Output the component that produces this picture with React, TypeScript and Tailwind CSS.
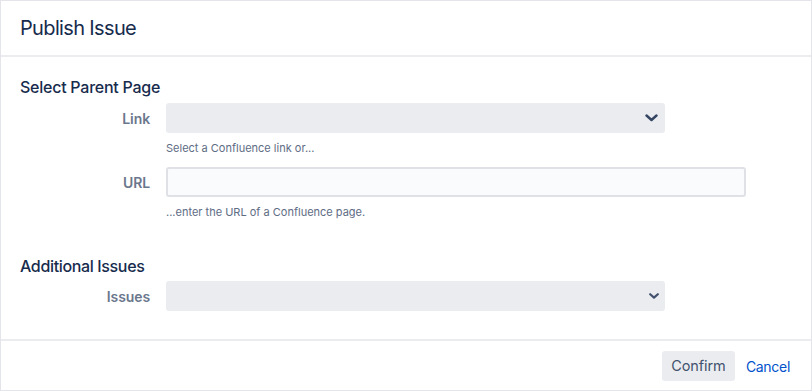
import React from "react";

const font = { fontFamily: "Inter, 'Noto Sans', 'Liberation Sans', sans-serif" };

const Chevron = ({ small }: { small?: boolean }) =>
  small ? (
    <svg width="10" height="6" viewBox="0 0 10 6" className="text-[#42526e]">
      <path d="M1.2 1.2 L5 4.6 L8.8 1.2" fill="none" stroke="currentColor" strokeWidth="2.2" strokeLinecap="round" strokeLinejoin="round" />
    </svg>
  ) : (
    <svg width="13" height="8" viewBox="0 0 13 8" className="text-[#344563]">
      <path d="M1.5 1.5 L6.5 6 L11.5 1.5" fill="none" stroke="currentColor" strokeWidth="2.4" strokeLinecap="round" strokeLinejoin="round" />
    </svg>
  );

const Row = ({ label, children }: { label: string; children: React.ReactNode }) => (
  <div className="flex items-center">
    <label className="w-[130px] text-right text-[14px] font-semibold tracking-[-0.1px] text-[#6b778c]">
      {label}
    </label>
    <div className="ml-4 flex-1">{children}</div>
  </div>
);

const Help = ({ children }: { children: React.ReactNode }) => (
  <p className="ml-[146px] text-[11px] leading-4 text-[#5e6c84]">{children}</p>
);

export default function App() {
  return (
    <div
      style={font}
      className="flex h-[391px] w-[812px] flex-col border border-[#e4e5ea] bg-white text-[#172b4d]"
    >
      <header className="flex h-[54px] items-center px-[19px]">
        <h1 className="text-[20px] font-normal leading-6 tracking-[-0.65px]">Publish Issue</h1>
      </header>
      <div className="h-[2px] bg-[#ebecf0]" />

      <main className="flex-1 px-[19px] pt-5">
        <h2 className="text-[16px] font-medium leading-5 tracking-[-0.25px]">Select Parent Page</h2>
        <div className="mt-[6px]">
          <Row label="Link">
            <div className="flex h-[30px] w-[499px] items-center justify-end rounded-[3px] bg-[#ebecf0] pr-[7px]">
              <Chevron />
            </div>
          </Row>
        </div>
        <div className="mt-[7px]">
          <Help>Select a Confluence link or...</Help>
        </div>
        <div className="mt-[11px]">
          <Row label="URL">
            <input className="block h-[30px] w-[580px] rounded-[3px] border-2 border-[#dfe1e6] bg-[#fafbfc] outline-none" />
          </Row>
        </div>
        <div className="mt-[7px]">
          <Help>...enter the URL of a Confluence page.</Help>
        </div>

        <h2 className="mt-9 text-[16px] font-medium leading-5 tracking-[-0.35px]">Additional Issues</h2>
        <div className="mt-[5px]">
          <Row label="Issues">
            <div className="flex h-[30px] w-[499px] items-center justify-end rounded-[3px] bg-[#ebecf0] pr-[6px]">
              <Chevron small />
            </div>
          </Row>
        </div>
      </main>

      <div className="h-[2px] bg-[#ebecf0]" />
      <footer className="flex h-[49px] items-start justify-end gap-[11px] pr-[21px] pt-[10px]">
        <button className="h-[30px] w-[73px] rounded-[3px] bg-[#ebecf0] text-[14.5px] tracking-[-0.1px] text-[#42526e]">
          Confirm
        </button>
        <button className="h-[30px] text-[14px] tracking-[-0.3px] text-[#0052cc]">Cancel</button>
      </footer>
    </div>
  );
}
